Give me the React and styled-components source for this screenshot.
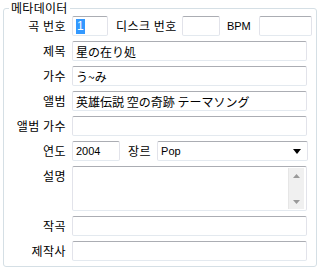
import React from "react";
import styled, { createGlobalStyle } from "styled-components";

const Global = createGlobalStyle`
  html, body { margin: 0; padding: 0; background: #ffffff; }
  body { font-family: "Noto Sans CJK KR", "Noto Sans", sans-serif; }
`;

const Group = styled.fieldset`
  box-sizing: border-box;
  margin: 0 0 0 3px;
  width: 314px;
  height: 267px;
  padding: 0 9px 0 0;
  border: 1px solid #d5dfe5;
  border-radius: 3px;
  min-width: 0;
`;

const Legend = styled.legend`
  margin-left: 5px;
  padding: 0 2px;
  font-family: "Noto Sans CJK KR", sans-serif;
  font-size: 12px;
  line-height: 16px;
  letter-spacing: 0.3px;
  color: #000;
`;

const Grid = styled.div`
  display: grid;
  grid-template-columns: 62px 235px;
  column-gap: 6px;
  row-gap: 5px;
  align-items: center;
`;

const Label = styled.div`
  font-family: "Noto Sans CJK KR", sans-serif;
  font-size: 12px;
  line-height: 14px;
  letter-spacing: 0.5px;
  color: #000;
  text-align: right;
  white-space: nowrap;
  align-self: ${(p) => (p.$top ? "start" : "center")};
  padding-top: ${(p) => (p.$top ? "3px" : "0")};
`;

const InlineLabel = styled.span`
  font-family: ${(p) => (p.$latin ? '"Liberation Sans", Arial, sans-serif' : '"Noto Sans CJK KR", sans-serif')};
  font-size: ${(p) => (p.$latin ? "11px" : "12px")};
  letter-spacing: ${(p) => (p.$latin ? "0" : "0.5px")};
  line-height: 14px;
  color: #000;
  white-space: nowrap;
  margin: 0 ${(p) => p.$mr || 0}px 0 ${(p) => p.$ml || 0}px;
`;

const Field = styled.div`
  box-sizing: border-box;
  height: 20px;
  width: ${(p) => (p.$w ? `${p.$w}px` : "100%")};
  flex: none;
  border: 1px solid #e2e3ea;
  border-top-color: #abadb3;
  border-bottom-color: #e3e9ef;
  border-radius: 2px;
  background: #fff;
  padding: 0 3px;
  display: flex;
  align-items: center;
  font-family: ${(p) => (p.$latin ? '"Liberation Sans", Arial, sans-serif' : '"Noto Sans CJK JP", sans-serif')};
  font-size: ${(p) => (p.$latin ? "11px" : "12px")};
  color: #000;
  white-space: nowrap;
  overflow: hidden;
`;

const Selected = styled.span`
  background: #3399ff;
  color: #fff;
  font-family: "Liberation Sans", Arial, sans-serif;
  font-size: 12px;
  line-height: 15px;
  padding: 0 1px;
`;

const Row = styled.div`
  display: flex;
  align-items: center;
`;

const Select = styled(Field)`
  flex: 1;
  width: auto;
  justify-content: space-between;
  padding-right: 6px;
  margin-left: ${(p) => p.$ml}px;
  margin-right: -1px;
`;

const Area = styled.div`
  box-sizing: border-box;
  height: 45px;
  border: 1px solid #e2e3ea;
  border-top-color: #abadb3;
  border-bottom-color: #e3e9ef;
  border-radius: 2px;
  background: #fff;
  display: flex;
  justify-content: flex-end;
  padding: 1px;
`;

const ScrollBar = styled.div`
  width: 16px;
  margin-right: 1px;
  background: #f0f0f0;
  border-left: 1px solid #e6e6e6;
  display: flex;
  flex-direction: column;
  justify-content: space-between;
  align-items: center;
  padding: 6px 0 5px;
  box-sizing: border-box;
`;

const Arrow = ({ dir, color = "#000", w = 7, h = 4 }) => (
  <svg width={w} height={h} viewBox={`0 0 ${w} ${h}`}>
    {dir === "up" ? (
      <polygon points={`0,${h} ${w},${h} ${w / 2},0`} fill={color} />
    ) : (
      <polygon points={`0,0 ${w},0 ${w / 2},${h}`} fill={color} />
    )}
  </svg>
);

export default function App() {
  return (
    <>
      <Global />
      <Group>
        <Legend>메타데이터</Legend>
        <Grid>
          <Label>곡 번호</Label>
          <Row>
            <Field $w={36} $latin>
              <Selected>1</Selected>
            </Field>
            <InlineLabel $ml={8} $mr={5}>디스크 번호</InlineLabel>
            <Field $w={38} />
            <InlineLabel $latin $ml={7} $mr={8}>BPM</InlineLabel>
            <Field $w={53} />
          </Row>

          <Label>제목</Label>
          <Field>星の在り処</Field>

          <Label>가수</Label>
          <Field>う~み</Field>

          <Label>앨범</Label>
          <Field>英雄伝説 空の奇跡 テーマソング</Field>

          <Label>앨범 가수</Label>
          <Field />

          <Label>연도</Label>
          <Row>
            <Field $w={48} $latin>2004</Field>
            <InlineLabel $ml={8}>장르</InlineLabel>
            <Select $latin $ml={6}>
              <span>Pop</span>
              <Arrow dir="down" w={8} h={5} />
            </Select>
          </Row>

          <Label $top>설명</Label>
          <Area>
            <ScrollBar>
              <Arrow dir="up" color="#9a9a9a" w={7} h={4} />
              <Arrow dir="down" color="#9a9a9a" w={7} h={4} />
            </ScrollBar>
          </Area>

          <Label>작곡</Label>
          <Field />

          <Label>제작사</Label>
          <Field />
        </Grid>
      </Group>
    </>
  );
}
